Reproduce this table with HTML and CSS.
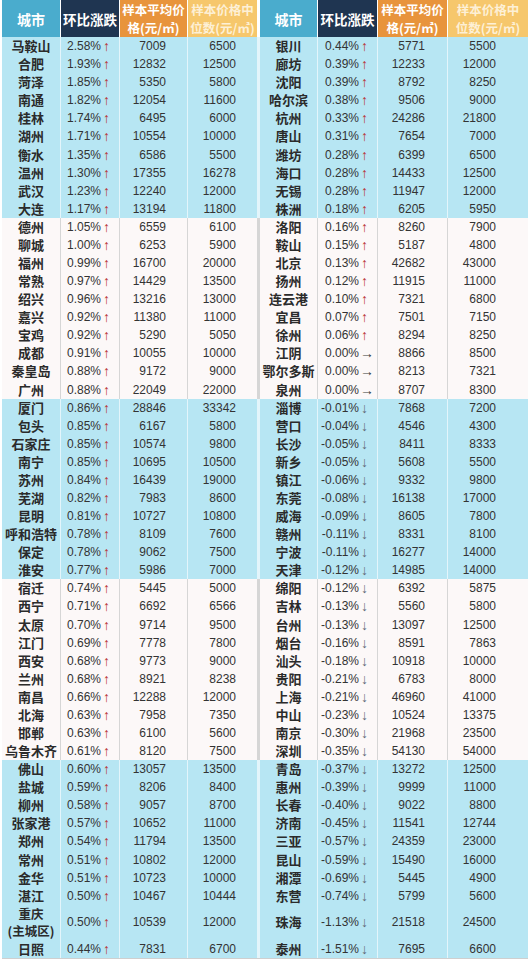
FILE: index.html
```html
<!DOCTYPE html>
<html lang="zh-CN">
<head>
<meta charset="utf-8">
<title>城市房价环比涨跌</title>
<link rel="stylesheet" href="styles.css">
</head>
<body>
<div class="tbl">
  <div class="row head">
    <div class="h h-city">城市</div>
    <div class="h h-chg">环比涨跌</div>
    <div class="h h-avg">样本平均价<br>格(元/㎡)</div>
    <div class="h h-med">样本价格中<br>位数(元/㎡)</div>
    <div class="h h-city h-gap">城市</div>
    <div class="h h-chg">环比涨跌</div>
    <div class="h h-avg">样本平均价<br>格(元/㎡)</div>
    <div class="h h-med">样本价格中<br>位数(元/㎡)</div>
  </div>

  <div class="grp blue">
    <div class="row"><div class="c">马鞍山</div><div class="p">2.58%<i class="up">↑</i></div><div class="n">7009</div><div class="n">6500</div><div class="c gap">银川</div><div class="p">0.44%<i class="up">↑</i></div><div class="n n3">5771</div><div class="n n4">5500</div></div>
    <div class="row"><div class="c">合肥</div><div class="p">1.93%<i class="up">↑</i></div><div class="n">12832</div><div class="n">12500</div><div class="c gap">廊坊</div><div class="p">0.39%<i class="up">↑</i></div><div class="n n3">12233</div><div class="n n4">12000</div></div>
    <div class="row"><div class="c">菏泽</div><div class="p">1.85%<i class="up">↑</i></div><div class="n">5350</div><div class="n">5800</div><div class="c gap">沈阳</div><div class="p">0.39%<i class="up">↑</i></div><div class="n n3">8792</div><div class="n n4">8250</div></div>
    <div class="row"><div class="c">南通</div><div class="p">1.82%<i class="up">↑</i></div><div class="n">12054</div><div class="n">11600</div><div class="c gap">哈尔滨</div><div class="p">0.38%<i class="up">↑</i></div><div class="n n3">9506</div><div class="n n4">9000</div></div>
    <div class="row"><div class="c">桂林</div><div class="p">1.74%<i class="up">↑</i></div><div class="n">6495</div><div class="n">6000</div><div class="c gap">杭州</div><div class="p">0.33%<i class="up">↑</i></div><div class="n n3">24286</div><div class="n n4">21800</div></div>
    <div class="row"><div class="c">湖州</div><div class="p">1.71%<i class="up">↑</i></div><div class="n">10554</div><div class="n">10000</div><div class="c gap">唐山</div><div class="p">0.31%<i class="up">↑</i></div><div class="n n3">7654</div><div class="n n4">7000</div></div>
    <div class="row"><div class="c">衡水</div><div class="p">1.35%<i class="up">↑</i></div><div class="n">6586</div><div class="n">5500</div><div class="c gap">潍坊</div><div class="p">0.28%<i class="up">↑</i></div><div class="n n3">6399</div><div class="n n4">6500</div></div>
    <div class="row"><div class="c">温州</div><div class="p">1.30%<i class="up">↑</i></div><div class="n">17355</div><div class="n">16278</div><div class="c gap">海口</div><div class="p">0.28%<i class="up">↑</i></div><div class="n n3">14433</div><div class="n n4">12500</div></div>
    <div class="row"><div class="c">武汉</div><div class="p">1.23%<i class="up">↑</i></div><div class="n">12240</div><div class="n">12000</div><div class="c gap">无锡</div><div class="p">0.28%<i class="up">↑</i></div><div class="n n3">11947</div><div class="n n4">12000</div></div>
    <div class="row"><div class="c">大连</div><div class="p">1.17%<i class="up">↑</i></div><div class="n">13194</div><div class="n">11800</div><div class="c gap">株洲</div><div class="p">0.18%<i class="up">↑</i></div><div class="n n3">6205</div><div class="n n4">5950</div></div>
  </div>

  <div class="grp white">
    <div class="row"><div class="c">德州</div><div class="p">1.05%<i class="up">↑</i></div><div class="n">6559</div><div class="n">6100</div><div class="c gap">洛阳</div><div class="p">0.16%<i class="up">↑</i></div><div class="n n3">8260</div><div class="n n4">7900</div></div>
    <div class="row"><div class="c">聊城</div><div class="p">1.00%<i class="up">↑</i></div><div class="n">6253</div><div class="n">5900</div><div class="c gap">鞍山</div><div class="p">0.15%<i class="up">↑</i></div><div class="n n3">5187</div><div class="n n4">4800</div></div>
    <div class="row"><div class="c">福州</div><div class="p">0.99%<i class="up">↑</i></div><div class="n">16700</div><div class="n">20000</div><div class="c gap">北京</div><div class="p">0.13%<i class="up">↑</i></div><div class="n n3">42682</div><div class="n n4">43000</div></div>
    <div class="row"><div class="c">常熟</div><div class="p">0.97%<i class="up">↑</i></div><div class="n">14429</div><div class="n">13500</div><div class="c gap">扬州</div><div class="p">0.12%<i class="up">↑</i></div><div class="n n3">11915</div><div class="n n4">11000</div></div>
    <div class="row"><div class="c">绍兴</div><div class="p">0.96%<i class="up">↑</i></div><div class="n">13216</div><div class="n">13000</div><div class="c gap">连云港</div><div class="p">0.10%<i class="up">↑</i></div><div class="n n3">7321</div><div class="n n4">6800</div></div>
    <div class="row"><div class="c">嘉兴</div><div class="p">0.92%<i class="up">↑</i></div><div class="n">11380</div><div class="n">11000</div><div class="c gap">宜昌</div><div class="p">0.07%<i class="up">↑</i></div><div class="n n3">7501</div><div class="n n4">7150</div></div>
    <div class="row"><div class="c">宝鸡</div><div class="p">0.92%<i class="up">↑</i></div><div class="n">5290</div><div class="n">5050</div><div class="c gap">徐州</div><div class="p">0.06%<i class="up">↑</i></div><div class="n n3">8294</div><div class="n n4">8250</div></div>
    <div class="row"><div class="c">成都</div><div class="p">0.91%<i class="up">↑</i></div><div class="n">10055</div><div class="n">10000</div><div class="c gap">江阴</div><div class="p">0.00%<i class="flat">→</i></div><div class="n n3">8866</div><div class="n n4">8500</div></div>
    <div class="row"><div class="c">秦皇岛</div><div class="p">0.88%<i class="up">↑</i></div><div class="n">9172</div><div class="n">9000</div><div class="c gap">鄂尔多斯</div><div class="p">0.00%<i class="flat">→</i></div><div class="n n3">8213</div><div class="n n4">7321</div></div>
    <div class="row"><div class="c">广州</div><div class="p">0.88%<i class="up">↑</i></div><div class="n">22049</div><div class="n">22000</div><div class="c gap">泉州</div><div class="p">0.00%<i class="flat">→</i></div><div class="n n3">8707</div><div class="n n4">8300</div></div>
  </div>

  <div class="grp blue">
    <div class="row"><div class="c">厦门</div><div class="p">0.86%<i class="up">↑</i></div><div class="n">28846</div><div class="n">33342</div><div class="c gap">淄博</div><div class="p">-0.01%<i class="dn">↓</i></div><div class="n n3">7868</div><div class="n n4">7200</div></div>
    <div class="row"><div class="c">包头</div><div class="p">0.85%<i class="up">↑</i></div><div class="n">6167</div><div class="n">5800</div><div class="c gap">营口</div><div class="p">-0.04%<i class="dn">↓</i></div><div class="n n3">4546</div><div class="n n4">4300</div></div>
    <div class="row"><div class="c">石家庄</div><div class="p">0.85%<i class="up">↑</i></div><div class="n">10574</div><div class="n">9800</div><div class="c gap">长沙</div><div class="p">-0.05%<i class="dn">↓</i></div><div class="n n3">8411</div><div class="n n4">8333</div></div>
    <div class="row"><div class="c">南宁</div><div class="p">0.85%<i class="up">↑</i></div><div class="n">10695</div><div class="n">10500</div><div class="c gap">新乡</div><div class="p">-0.05%<i class="dn">↓</i></div><div class="n n3">5608</div><div class="n n4">5500</div></div>
    <div class="row"><div class="c">苏州</div><div class="p">0.84%<i class="up">↑</i></div><div class="n">16439</div><div class="n">19000</div><div class="c gap">镇江</div><div class="p">-0.06%<i class="dn">↓</i></div><div class="n n3">9332</div><div class="n n4">9800</div></div>
    <div class="row"><div class="c">芜湖</div><div class="p">0.82%<i class="up">↑</i></div><div class="n">7983</div><div class="n">8600</div><div class="c gap">东莞</div><div class="p">-0.08%<i class="dn">↓</i></div><div class="n n3">16138</div><div class="n n4">17000</div></div>
    <div class="row"><div class="c">昆明</div><div class="p">0.81%<i class="up">↑</i></div><div class="n">10727</div><div class="n">10800</div><div class="c gap">威海</div><div class="p">-0.09%<i class="dn">↓</i></div><div class="n n3">8605</div><div class="n n4">7800</div></div>
    <div class="row"><div class="c">呼和浩特</div><div class="p">0.78%<i class="up">↑</i></div><div class="n">8109</div><div class="n">7600</div><div class="c gap">赣州</div><div class="p">-0.11%<i class="dn">↓</i></div><div class="n n3">8331</div><div class="n n4">8100</div></div>
    <div class="row"><div class="c">保定</div><div class="p">0.78%<i class="up">↑</i></div><div class="n">9062</div><div class="n">7500</div><div class="c gap">宁波</div><div class="p">-0.11%<i class="dn">↓</i></div><div class="n n3">16277</div><div class="n n4">14000</div></div>
    <div class="row"><div class="c">淮安</div><div class="p">0.77%<i class="up">↑</i></div><div class="n">5986</div><div class="n">7000</div><div class="c gap">天津</div><div class="p">-0.12%<i class="dn">↓</i></div><div class="n n3">14985</div><div class="n n4">14000</div></div>
  </div>

  <div class="grp white">
    <div class="row"><div class="c">宿迁</div><div class="p">0.74%<i class="up">↑</i></div><div class="n">5445</div><div class="n">5000</div><div class="c gap">绵阳</div><div class="p">-0.12%<i class="dn">↓</i></div><div class="n n3">6392</div><div class="n n4">5875</div></div>
    <div class="row"><div class="c">西宁</div><div class="p">0.71%<i class="up">↑</i></div><div class="n">6692</div><div class="n">6566</div><div class="c gap">吉林</div><div class="p">-0.13%<i class="dn">↓</i></div><div class="n n3">5560</div><div class="n n4">5800</div></div>
    <div class="row"><div class="c">太原</div><div class="p">0.70%<i class="up">↑</i></div><div class="n">9714</div><div class="n">9500</div><div class="c gap">台州</div><div class="p">-0.13%<i class="dn">↓</i></div><div class="n n3">13097</div><div class="n n4">12500</div></div>
    <div class="row"><div class="c">江门</div><div class="p">0.69%<i class="up">↑</i></div><div class="n">7778</div><div class="n">7800</div><div class="c gap">烟台</div><div class="p">-0.16%<i class="dn">↓</i></div><div class="n n3">8591</div><div class="n n4">7863</div></div>
    <div class="row"><div class="c">西安</div><div class="p">0.68%<i class="up">↑</i></div><div class="n">9773</div><div class="n">9000</div><div class="c gap">汕头</div><div class="p">-0.18%<i class="dn">↓</i></div><div class="n n3">10918</div><div class="n n4">10000</div></div>
    <div class="row"><div class="c">兰州</div><div class="p">0.68%<i class="up">↑</i></div><div class="n">8921</div><div class="n">8238</div><div class="c gap">贵阳</div><div class="p">-0.21%<i class="dn">↓</i></div><div class="n n3">6783</div><div class="n n4">8000</div></div>
    <div class="row"><div class="c">南昌</div><div class="p">0.66%<i class="up">↑</i></div><div class="n">12288</div><div class="n">12000</div><div class="c gap">上海</div><div class="p">-0.21%<i class="dn">↓</i></div><div class="n n3">46960</div><div class="n n4">41000</div></div>
    <div class="row"><div class="c">北海</div><div class="p">0.63%<i class="up">↑</i></div><div class="n">7958</div><div class="n">7350</div><div class="c gap">中山</div><div class="p">-0.23%<i class="dn">↓</i></div><div class="n n3">10524</div><div class="n n4">13375</div></div>
    <div class="row"><div class="c">邯郸</div><div class="p">0.63%<i class="up">↑</i></div><div class="n">6100</div><div class="n">5600</div><div class="c gap">南京</div><div class="p">-0.30%<i class="dn">↓</i></div><div class="n n3">21968</div><div class="n n4">23500</div></div>
    <div class="row"><div class="c">乌鲁木齐</div><div class="p">0.61%<i class="up">↑</i></div><div class="n">8120</div><div class="n">7500</div><div class="c gap">深圳</div><div class="p">-0.35%<i class="dn">↓</i></div><div class="n n3">54130</div><div class="n n4">54000</div></div>
  </div>

  <div class="grp blue last">
    <div class="row"><div class="c">佛山</div><div class="p">0.60%<i class="up">↑</i></div><div class="n">13057</div><div class="n">13500</div><div class="c gap">青岛</div><div class="p">-0.37%<i class="dn">↓</i></div><div class="n n3">13272</div><div class="n n4">12500</div></div>
    <div class="row"><div class="c">盐城</div><div class="p">0.59%<i class="up">↑</i></div><div class="n">8206</div><div class="n">8400</div><div class="c gap">惠州</div><div class="p">-0.39%<i class="dn">↓</i></div><div class="n n3">9999</div><div class="n n4">11000</div></div>
    <div class="row"><div class="c">柳州</div><div class="p">0.58%<i class="up">↑</i></div><div class="n">9057</div><div class="n">8700</div><div class="c gap">长春</div><div class="p">-0.40%<i class="dn">↓</i></div><div class="n n3">9022</div><div class="n n4">8800</div></div>
    <div class="row"><div class="c">张家港</div><div class="p">0.57%<i class="up">↑</i></div><div class="n">10652</div><div class="n">11000</div><div class="c gap">济南</div><div class="p">-0.45%<i class="dn">↓</i></div><div class="n n3">11541</div><div class="n n4">12744</div></div>
    <div class="row"><div class="c">郑州</div><div class="p">0.54%<i class="up">↑</i></div><div class="n">11794</div><div class="n">13500</div><div class="c gap">三亚</div><div class="p">-0.57%<i class="dn">↓</i></div><div class="n n3">24359</div><div class="n n4">23000</div></div>
    <div class="row"><div class="c">常州</div><div class="p">0.51%<i class="up">↑</i></div><div class="n">10802</div><div class="n">12000</div><div class="c gap">昆山</div><div class="p">-0.59%<i class="dn">↓</i></div><div class="n n3">15490</div><div class="n n4">16000</div></div>
    <div class="row"><div class="c">金华</div><div class="p">0.51%<i class="up">↑</i></div><div class="n">10723</div><div class="n">10000</div><div class="c gap">湘潭</div><div class="p">-0.69%<i class="dn">↓</i></div><div class="n n3">5445</div><div class="n n4">4900</div></div>
    <div class="row"><div class="c">湛江</div><div class="p">0.50%<i class="up">↑</i></div><div class="n">10467</div><div class="n">10444</div><div class="c gap">东营</div><div class="p">-0.74%<i class="dn">↓</i></div><div class="n n3">5799</div><div class="n n4">5600</div></div>
    <div class="row tall"><div class="c two">重庆<br>(主城区)</div><div class="p">0.50%<i class="up">↑</i></div><div class="n">10539</div><div class="n">12000</div><div class="c gap">珠海</div><div class="p">-1.13%<i class="dn">↓</i></div><div class="n n3">21518</div><div class="n n4">24500</div></div>
    <div class="row"><div class="c">日照</div><div class="p">0.44%<i class="up">↑</i></div><div class="n">7831</div><div class="n">6700</div><div class="c gap">泰州</div><div class="p">-1.51%<i class="dn">↓</i></div><div class="n n3">7695</div><div class="n n4">6600</div></div>
  </div>
</div>
</body>
</html>
```

FILE: styles.css
```css
html, body {
  margin: 0;
  padding: 0;
  background: #ffffff;
}

.tbl {
  margin-left: 2px;
  width: 526px;
  font-family: "Liberation Sans", "Noto Sans CJK SC", sans-serif;
  color: #2a2a2a;
}

.row {
  display: grid;
  grid-template-columns: 59px 59px 68px 70px 60px 60px 70px 80px;
  height: 18.08px;
}

.row > div {
  box-sizing: border-box;
  display: flex;
  align-items: center;
  border-right: 1px solid var(--line);
  white-space: nowrap;
  overflow: hidden;
}

.row > div:last-child {
  border-right: none;
}

.row.tall {
  height: 35.2px;
}

/* header */
.head {
  height: 37px;
}

.head > .h {
  justify-content: center;
  text-align: center;
  color: #ffffff;
  font-family: "Noto Sans CJK SC", sans-serif;
  font-weight: bold;
  border-right: 1px solid #ffffff;
  line-height: 18px;
}

.h-city {
  background: #4aaccd;
  font-size: 14px;
}

.h-chg {
  background: #1f3551;
  font-size: 13.5px;
}

.h-avg {
  background: #e8943c;
  font-size: 12.5px;
}

.head > .h-med {
  background: #f6c76c;
  font-size: 12.5px;
  color: #fdf0d6;
}

.head > .h-gap {
  border-left: 2px solid #ffffff;
}

/* body groups */
.blue {
  background: #b7e6f3;
  --line: #e3f5fb;
}

.white {
  background: #fcf8f8;
  --line: #d6d6d6;
}

.last {
  border-bottom: 1px solid #cfcfcf;
}

.c {
  justify-content: center;
  text-align: center;
  font-family: "Noto Sans CJK SC", sans-serif;
  font-weight: bold;
  font-size: 13px;
  color: #2b2b2b;
  line-height: 18px;
}

.row > .c.two {
  font-size: 12.5px;
  line-height: 17.5px;
  overflow: visible;
}

.row > .gap {
  border-left: 2px solid var(--line);
}

.p {
  justify-content: flex-end;
  padding-right: 8px;
  font-size: 12px;
  color: #333333;
}

.p i {
  font-style: normal;
  font-family: "Liberation Sans", sans-serif;
  font-size: 14px;
  line-height: 14px;
  margin-left: 1px;
  width: 9px;
  text-align: center;
}

.p .up {
  color: #b8352e;
}

.p .dn {
  color: #5f6b78;
}

.p .flat {
  color: #3a3a3a;
}

.n {
  justify-content: flex-end;
  padding-right: 21px;
  font-size: 12px;
  color: #333333;
}

.n.n3 {
  padding-right: 22px;
}

.n.n4 {
  padding-right: 32px;
}
```
